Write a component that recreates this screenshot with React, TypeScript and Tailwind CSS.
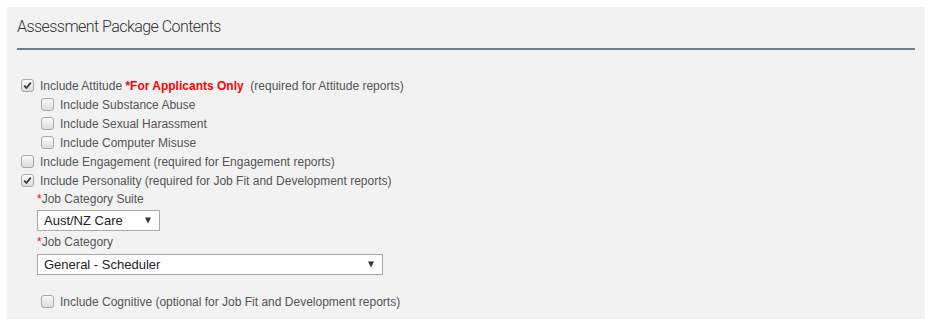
import React from 'react';

function Box({ checked = false }: { checked?: boolean }) {
  return (
    <span className="relative inline-block w-[13px] h-[13px] shrink-0 rounded-[3px] border border-[#a9a9a9] bg-gradient-to-b from-[#fbfbfb] to-[#dcdcdc]">
      {checked && (
        <svg viewBox="0 0 13 13" className="absolute -left-px -top-px w-[13px] h-[13px]">
          <path d="M3.2 6.6 L5.4 9 L9.8 3.6" fill="none" stroke="#3a3a3a" strokeWidth="1.8" strokeLinejoin="round" />
        </svg>
      )}
    </span>
  );
}

function Row({
  indent = false,
  checked = false,
  children,
}: {
  indent?: boolean;
  checked?: boolean;
  children: React.ReactNode;
}) {
  return (
    <div className={`flex items-center h-[19px] gap-[6px] ${indent ? 'pl-[24px]' : 'pl-[4px]'}`}>
      <Box checked={checked} />
      <span className="whitespace-nowrap">{children}</span>
    </div>
  );
}

function Select({ value, width }: { value: string; width: string }) {
  return (
    <div
      className={`flex items-center justify-between h-[21px] ${width} border border-[#a9a9a9] bg-white pl-[6px] pr-[8px] text-[13px] text-[#222]`}
    >
      <span>{value}</span>
      <svg viewBox="0 0 6 7" className="w-[6px] h-[7px]">
        <path d="M0 0.5 H6 L3 6.5 Z" fill="#333" />
      </svg>
    </div>
  );
}

export default function App() {
  return (
    <div className="w-[936px] h-[326px] bg-white pt-[7px] pl-[7px]">
      <div className="w-[918px] h-[312px] bg-[#f2f2f2] px-[10px] font-['Liberation_Sans',Arial,sans-serif] text-[12px] text-[#555]">
        <h2 className="pt-[10px] pb-[11px] border-b-2 border-[#6f7c92] font-['Roboto',sans-serif] font-light text-[16px] leading-[20px] tracking-[-0.55px] text-[#333]">
          Assessment Package Contents
        </h2>

        <div className="pt-[26px]">
          <Row checked>
            Include Attitude{' '}
            <span className="font-bold text-[#ff0000]">*For Applicants Only</span>
            &nbsp;&nbsp;(required for Attitude reports)
          </Row>
          <Row indent>Include Substance Abuse</Row>
          <Row indent>Include Sexual Harassment</Row>
          <Row indent>Include Computer Misuse</Row>
          <Row>Include Engagement (required for Engagement reports)</Row>
          <Row checked>Include Personality (required for Job Fit and Development reports)</Row>

          <div className="pl-[20px]">
            <div className="h-[17px] leading-[17px] mt-px">
              <span className="text-[#ff0000]">*</span>Job Category Suite
            </div>
            <div className="mt-[2px]">
              <Select value="Aust/NZ Care" width="w-[123px]" />
            </div>
            <div className="h-[17px] leading-[17px] mt-[3px]">
              <span className="text-[#ff0000]">*</span>Job Category
            </div>
            <div className="mt-[3px]">
              <Select value="General - Scheduler" width="w-[346px]" />
            </div>
          </div>

          <div className="mt-[17px]">
            <Row indent>Include Cognitive (optional for Job Fit and Development reports)</Row>
          </div>
        </div>
      </div>
    </div>
  );
}
